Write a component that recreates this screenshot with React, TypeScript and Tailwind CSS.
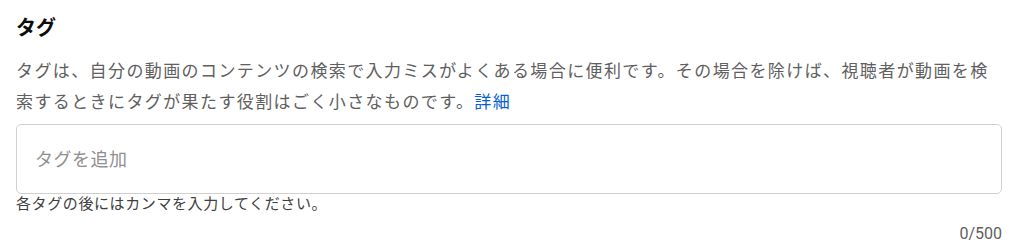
export default function App() {
  return (
    <div className="w-[1024px] h-[246px] bg-white overflow-hidden px-4 pt-[14px] font-['Roboto','Noto_Sans_CJK_JP',sans-serif]">
      <h2 className="text-[20px] leading-[28px] font-bold text-[#0d0d0d]">タグ</h2>
      <p className="mt-[14px] text-[17px] leading-[31px] text-[#606060] pr-[6px]">
        <span className="tracking-[1.4px]">タグは、自分の動画のコンテンツの検索で入力ミスがよくある場合に便利です。その場合を除けば、視聴者が動画を検索するときにタグが果たす役割はごく小さなものです。</span>
        <span className="tracking-[1.4px] text-[#065fd4]">詳細</span>
      </p>
      <div className="mt-[6px] w-[986px] h-[70px] border border-[#d0d0d0] rounded-[5px] flex items-center px-[18px]">
        <span className="text-[18px] tracking-[0.5px] text-[#909090]">タグを追加</span>
      </div>
      <div className="w-[986px] text-[15px] leading-[20px] tracking-[0.6px] text-[#404040]">各タグの後にはカンマを入力してください。</div>
      <div className="w-[986px] text-right text-[16px] leading-[20px] text-[#606060] mt-[10px]">0/500</div>
    </div>
  );
}
